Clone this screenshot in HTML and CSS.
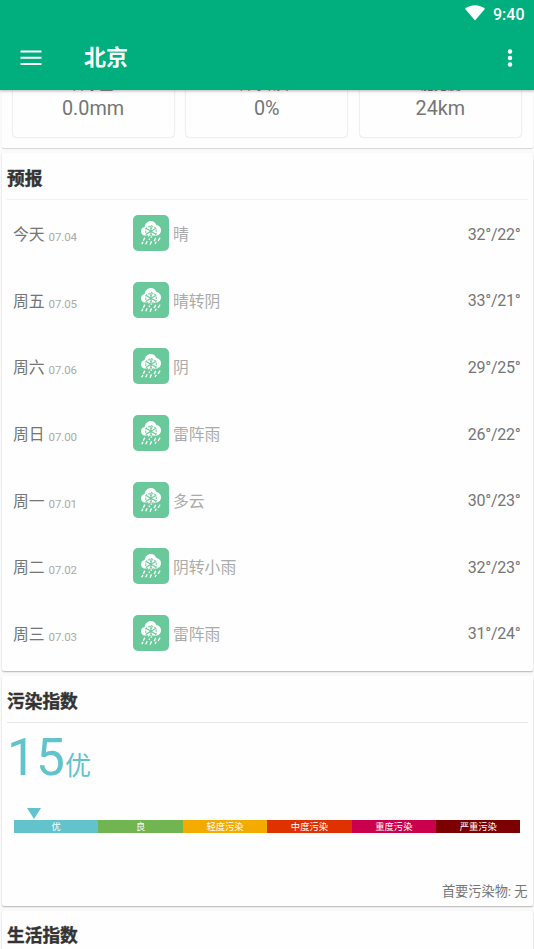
FILE: index.html
```
<!DOCTYPE html>
<html lang="zh-CN">
<head>
<meta charset="utf-8">
<title>北京</title>
<link rel="stylesheet" href="styles.css">
</head>
<body>
<svg width="0" height="0" class="defs">
  <symbol id="weather" viewBox="0 0 36 36">
    <path fill="#fff" d="M12.2 20.6h-.4c-2.2-.2-3.8-2-3.8-4.2 0-2.4 1.6-4 3.6-4.3C12.200 8.600 14.600 6.100 17.700 6.100c2.700 0 4.700 1.400 5.600 3.900 2.800.3 4.700 2.500 4.700 5.200 0 2.900-2 5.200-4.900 5.400z"/>
    <path fill="#fff" d="M18 9.800l5.600 3.200v6.600L18 22.900l-5.600-3.300V13z"/>
    <path fill="none" stroke="#6ac99a" stroke-width="1" stroke-dasharray="2.6 1" d="M18 10.400l5.200 2.900v6.100L18 22.300l-5.200-2.900v-6.100z"/>
    <g fill="none" stroke="#6ac99a" stroke-width="1.150">
      <path d="M18 11v10.700M13.300 13.600l9.400 5.500M13.300 19.100l9.400-5.500"/>
      <path stroke-width=".8" d="M16.500 12.300l1.500 1.400 1.500-1.400M16.500 20.400l1.500-1.400 1.500 1.400"/>
    </g>
    <path fill="none" stroke="#fff" stroke-width="1.400" d="M11.800 22.600l-1.500 3M10 26.800l-1.300 2.500M14.200 26.200l-1.500 3.100M16.600 23.600l-.6 1.300M18.500 26.400l-1.500 3.300M22.800 22.800l-1.700 3.300M27 22.600l-1.900 3.400M23.200 26.800l-1.100 2.200"/>
  </symbol>
</svg>
<div class="screen">
  <header class="appbar">
    <div class="status">
      <svg class="wifi" width="20" height="16" viewBox="0 0 20 16"><path fill="#fff" d="M0 3.800C5.600-.9 14.400-.9 20 3.800L10 15.600z"/></svg>
      <span>9:40</span>
    </div>
    <div class="toolbar">
      <svg class="menu" width="22" height="16" viewBox="0 0 22 16"><path stroke="#fff" stroke-width="2" d="M.5 1.500H21.500M.5 7.700H21.500M.5 13.900H21.500"/></svg>
      <h1>北京</h1>
      <svg width="6" height="18" viewBox="0 0 6 18" fill="#fff"><circle cx="3" cy="2.500" r="2.250"/><circle cx="3" cy="9" r="2.250"/><circle cx="3" cy="15.500" r="2.250"/></svg>
    </div>
  </header>
  <main>
    <section class="card metrics">
      <div class="metric"><span>降水量</span><b>0.0mm</b></div>
      <div class="metric"><span>降水概率</span><b>0%</b></div>
      <div class="metric"><span>能见度</span><b>24km</b></div>
    </section>
    <section class="card forecast">
      <h2>预报</h2>
      <div class="row"><span class="day">今天 <small>07.04</small></span><svg class="icon"><use href="#weather"/></svg><span class="sky">晴</span><span class="temp">32°/22°</span></div>
      <div class="row"><span class="day">周五 <small>07.05</small></span><svg class="icon"><use href="#weather"/></svg><span class="sky">晴转阴</span><span class="temp">33°/21°</span></div>
      <div class="row"><span class="day">周六 <small>07.06</small></span><svg class="icon"><use href="#weather"/></svg><span class="sky">阴</span><span class="temp">29°/25°</span></div>
      <div class="row"><span class="day">周日 <small>07.00</small></span><svg class="icon"><use href="#weather"/></svg><span class="sky">雷阵雨</span><span class="temp">26°/22°</span></div>
      <div class="row"><span class="day">周一 <small>07.01</small></span><svg class="icon"><use href="#weather"/></svg><span class="sky">多云</span><span class="temp">30°/23°</span></div>
      <div class="row"><span class="day">周二 <small>07.02</small></span><svg class="icon"><use href="#weather"/></svg><span class="sky">阴转小雨</span><span class="temp">32°/23°</span></div>
      <div class="row"><span class="day">周三 <small>07.03</small></span><svg class="icon"><use href="#weather"/></svg><span class="sky">雷阵雨</span><span class="temp">31°/24°</span></div>
    </section>
    <section class="card pollution">
      <h2>污染指数</h2>
      <div class="aqi"><span class="value">15</span><span class="level">优</span></div>
      <svg class="marker" width="14" height="11" viewBox="0 0 14 11"><path fill="#62c3cc" d="M0 0h14L7 11z"/></svg>
      <div class="scale">
        <span class="s1">优</span><span class="s2">良</span><span class="s3">轻度污染</span><span class="s4">中度污染</span><span class="s5">重度污染</span><span class="s6">严重污染</span>
      </div>
      <p>首要污染物: 无</p>
    </section>
    <section class="card life">
      <h2>生活指数</h2>
    </section>
  </main>
</div>
</body>
</html>
```
FILE: styles.css
```
* { box-sizing: border-box; }
body {
  margin: 0;
  background: #fafafa;
  color: #757575;
  font-family: Roboto, "Noto Sans CJK SC", sans-serif;
}
.defs { display: block; }
.screen {
  display: flex;
  flex-direction: column;
  height: 949px;
  overflow: hidden;
}
.appbar {
  position: relative;
  z-index: 1;
  flex: none;
  height: 89.5px;
  background: #00ae7e;
  color: #fff;
  box-shadow: 0 1px 3px rgba(0, 0, 0, .3);
}
.status {
  display: flex;
  justify-content: flex-end;
  align-items: center;
  gap: 8px;
  height: 28px;
  padding-right: 9.5px;
  font-size: 16px;
  font-weight: 500;
}
.wifi { margin-bottom: 2px; }
.toolbar {
  display: flex;
  align-items: center;
  height: 60px;
  padding: 0 21.5px 0 20px;
}
.menu { margin-bottom: 1px; }
h1 {
  flex: 1;
  margin: 0 0 0 42px;
  font-size: 22px;
  line-height: 30px;
  font-weight: 700;
}
main {
  display: flex;
  flex-direction: column;
  gap: 5px;
}
.card {
  flex: none;
  margin: 0 1.5px 0 2px;
  background: #fefefe;
  border-radius: 2px;
  box-shadow: 0 1px 1.5px rgba(0, 0, 0, .28);
}
.metrics {
  display: grid;
  grid-template-columns: repeat(3, 1fr);
  gap: 12.5px;
  height: 98px;
  margin-top: -39.5px;
  padding: 0 11.5px 11px 10.5px;
  box-shadow: 0 1px 1px rgba(0, 0, 0, .14);
}
.metric {
  display: flex;
  flex-direction: column;
  align-items: center;
  padding-top: 23px;
  border-radius: 3px;
  box-shadow: 0 0 1.5px rgba(0, 0, 0, .3);
}
.metric span {
  font-size: 13.5px;
  line-height: 22px;
}
.metric b {
  font-size: 19.8px;
  line-height: 28px;
  font-weight: 400;
}
h2 {
  height: 47px;
  margin: 0 5px;
  border-bottom: 1px solid #f1f1f1;
  color: #333;
  font-size: 17.7px;
  line-height: 52px;
  font-weight: 700;
  -webkit-text-stroke: .4px #333;
}
.forecast { height: 518px; }
.row {
  display: flex;
  align-items: center;
  height: 66.6px;
  padding: 0 12px 0 11px;
}
.day {
  width: 120px;
  padding-top: 1px;
  font-size: 15.8px;
}
.day small {
  position: relative;
  top: 1px;
  color: #aaa;
  font-size: 11.5px;
  letter-spacing: -.1px;
}
.icon {
  width: 36px;
  height: 36px;
  margin-left: -.5px;
  border-radius: 5px;
  background: #6ac99a;
}
.sky {
  flex: 1;
  margin-left: 4.5px;
  padding-top: 1px;
  color: #aaa;
  font-size: 15.8px;
}
.temp {
  padding-top: 2px;
  font-size: 16px;
  letter-spacing: -.25px;
}
.pollution { height: 230px; }
.pollution h2 { border-color: #e8e8e8; }
.aqi {
  display: flex;
  align-items: baseline;
  height: 85px;
  padding-left: 5px;
  color: #62c3cc;
}
.value { font-size: 51.5px; line-height: 69px; }
.level { font-size: 26px; line-height: 40px; }
.marker {
  display: block;
  margin-left: 24.5px;
}
.scale {
  display: grid;
  grid-template-columns: repeat(6, 1fr);
  height: 12.5px;
  margin: 1px 12px 0;
  color: #fff;
  font-size: 9.3px;
  line-height: 13px;
  text-align: center;
}
.s1 { background: #62c3cc; }
.s2 { background: #70b551; }
.s3 { background: #f4ab00; }
.s4 { background: #e03200; }
.s5 { background: #ca004c; }
.s6 { background: #7c0000; }
.pollution p {
  margin: 49.5px 5px 0;
  font-size: 13.2px;
  line-height: 20px;
  text-align: right;
}
.life { height: 60px; }
.life h2 {
  border: 0;
  line-height: 50px;
}
```
